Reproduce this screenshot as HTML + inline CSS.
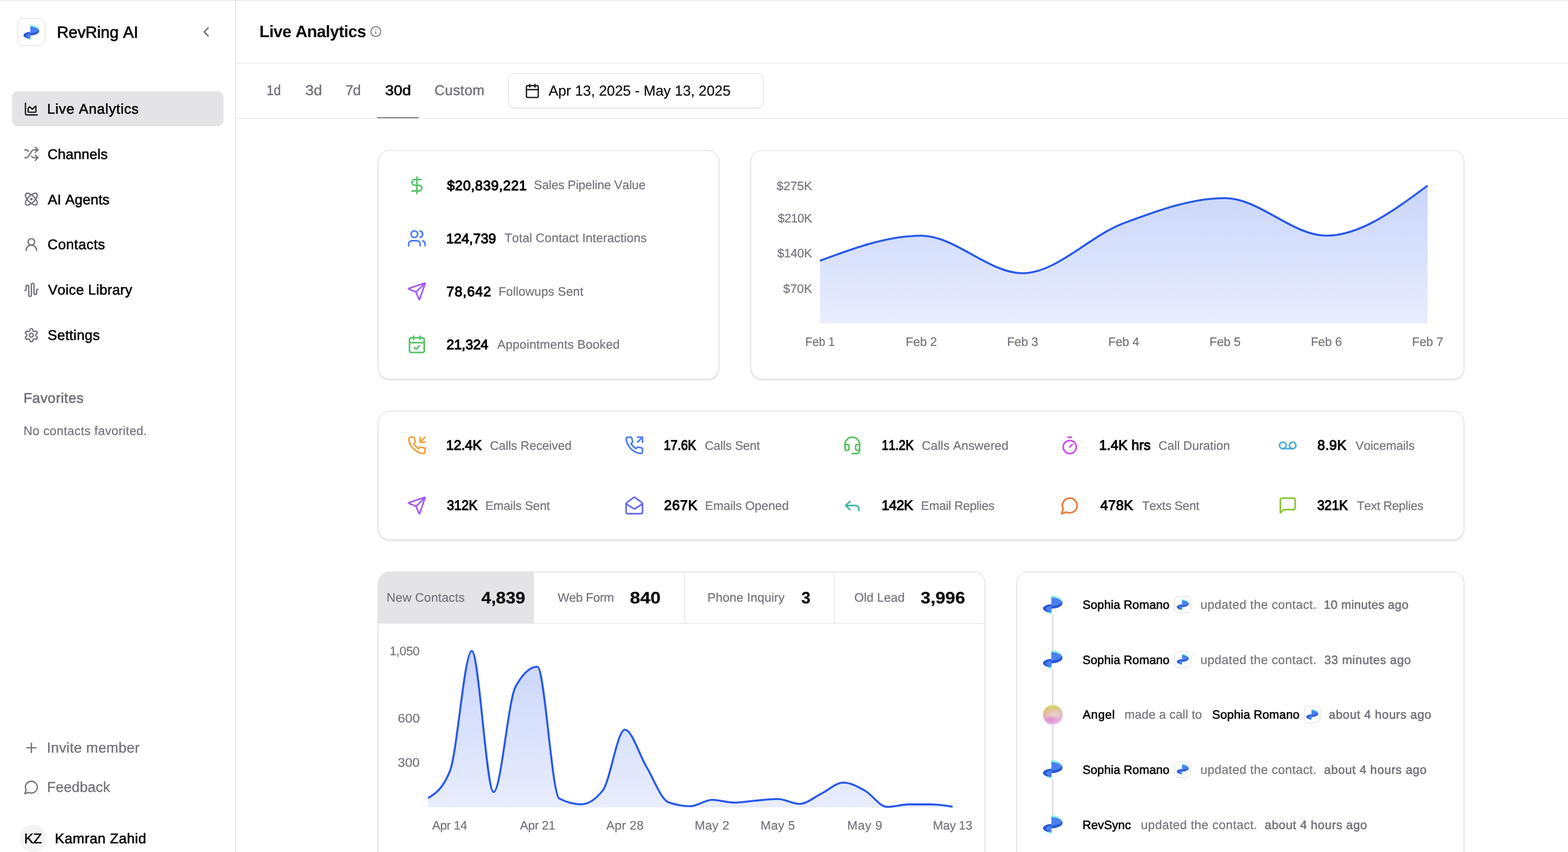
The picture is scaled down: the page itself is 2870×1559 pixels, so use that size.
<!DOCTYPE html><html lang="en"><head><meta charset="utf-8"><title>RevRing AI - Live Analytics</title>
<meta name="viewport" content="width=2870">
<style>
*{box-sizing:border-box}
html,body{margin:0;padding:0}
body{width:2870px;height:1559px;overflow:hidden;background:#fff;position:relative;
 font-family:"Liberation Sans",sans-serif;font-kerning:none;-webkit-font-smoothing:antialiased;text-rendering:geometricPrecision}
#app{position:absolute;left:0;top:0;width:2870px;height:1559px;will-change:transform;opacity:.999}
.t{position:absolute;white-space:nowrap;line-height:1;margin:0;padding:0;font-weight:400;display:block}
.ic{position:absolute;display:block;overflow:visible}
.abs{position:absolute}
.sidebar{position:absolute;left:0;top:0;width:432px;height:1559px;border-right:1px solid #dcdce1;background:#fff}
.topline{position:absolute;left:0;top:0;width:2870px;height:1px;background:#dfe1de;z-index:5}
.header{position:absolute;left:432px;top:0;width:2438px;height:116px;border-bottom:1px solid #e3e3e7}
.tabs{position:absolute;left:432px;top:116px;width:2438px;height:101px;border-bottom:1px solid #e3e3e7}
.main{position:absolute;left:432px;top:217px;width:2438px;height:1342px}
.card{position:absolute;background:#fff;border:1px solid #dddde1;border-radius:21px;
 box-shadow:0 1.8px 5.4px rgba(0,0,0,.1),0 1.8px 3.6px -1.8px rgba(0,0,0,.1)}
.navact{position:absolute;left:22px;top:167px;width:387px;height:64px;border-radius:11px;background:#e4e4e7}
.logobox{position:absolute;border:1px solid #d9d9df;background:#fff}
.datebtn{position:absolute;left:498px;top:18px;width:468px;height:64px;border:1px solid #dcdce2;border-radius:11px;background:#fff;
 box-shadow:0 1.8px 3.6px rgba(0,0,0,.05)}
.uline{position:absolute;left:258px;top:99px;width:76px;height:1px;background:#18181b}
.avatar{position:absolute;left:36px;top:1509px;width:50px;height:50px;border-radius:50%;background:#f4f4f5}
.tabhead{position:absolute;left:0;top:0;width:1109px;height:94px;border-bottom:1px solid #dfdfe4;border-radius:20px 20px 0 0;overflow:hidden}
.tab{position:absolute;top:0;height:93px;border-right:1px solid #dfdfe4}
.tab.on{background:#e4e4e7}
.tl{position:absolute;width:2px;background:#d3d5dc}
.angel{position:absolute;width:36px;height:36px;border-radius:50%;
 background:radial-gradient(ellipse 42% 22% at 40% 76%,#e08cd6 0,rgba(224,140,214,0) 100%),
 radial-gradient(ellipse 48% 30% at 58% 46%,#ecd4ca 0,rgba(236,212,202,0) 100%),
 linear-gradient(170deg,#d6e860 0%,#d8c680 24%,#e2bab6 48%,#e6aede 76%,#f0caf4 100%)}
</style></head><body><div id="app">
<aside class="sidebar">
<div class="logobox" style="left:32px;top:33px;width:51px;height:51px;border-radius:10px"></div>
<svg class="ic" style="left:42.9px;top:44.9px" width="29" height="29" viewBox="0 0 36 36"><path fill="#7af0dc" d="M15.4 .7C22 .85 28.6 3.5 32.7 7.5C34.3 9.1 35.4 11.2 35.75 13.6L15.4 10z"/><path fill="#7af0dc" d="M6.6 30.2C9.4 32.9 12.4 34.6 15.4 35.3V30z"/><path fill="#2858d4" d="M34.1 11.3c1.1 1.1 1.7 2.3 1.65 3.6C35.5 20.3 26.5 24.5 15.4 24.75V16.4C8.5 16.6 1.2 19.5 .1 23.5c-.7 2.6 2.4 5.4 6.9 7.15L15.4 31.5V19.6z"/><path fill="#4a80f0" d="M15.4 4.6c8 0 16.2 2.9 18.8 6.8.6 4.1-7.8 7.8-18.8 8.1z"/><path fill="#4a80f0" d="M15.4 19.8C10 20.5 6 22.7 5.9 25.5c-.1 2.2 3.6 4.9 9.5 5.9z"/></svg>
<div class="t" style="left:104.28px;top:45px;font-size:29.5px;letter-spacing:-0.05px;color:#09090b;-webkit-text-stroke:0.8px #09090b;">RevRing AI</div>
<svg class="ic" style="left:362.8px;top:43.7px" width="28.8" height="28.8" viewBox="0 0 24 24" fill="none" stroke="#686872" stroke-width="2" stroke-linecap="round" stroke-linejoin="round"><path d="m15 18-6-6 6-6"/></svg>
<nav>
<div class="navact"></div>
<svg class="ic" style="left:43.2px;top:184.6px" width="28.8" height="28.8" viewBox="0 0 24 24" fill="none" stroke="#18181b" stroke-width="2" stroke-linecap="round" stroke-linejoin="round"><path d="M3 3v16a2 2 0 0 0 2 2h16"/><path d="M7 11.207a.5.5 0 0 1 .146-.353l2-2a.5.5 0 0 1 .708 0l3.292 3.292a.5.5 0 0 0 .708 0l4.292-4.292a.5.5 0 0 1 .854.353V16a1 1 0 0 1-1 1H8a1 1 0 0 1-1-1z"/></svg>
<a class="t" style="left:86.28px;top:188px;font-size:25.81px;letter-spacing:0.75px;color:#09090b;-webkit-text-stroke:0.7px #09090b;">Live Analytics</a>
<svg class="ic" style="left:43.2px;top:267.4px" width="28.8" height="28.8" viewBox="0 0 24 24" fill="none" stroke="#71717a" stroke-width="2" stroke-linecap="round" stroke-linejoin="round"><path d="m18 14 4 4-4 4"/><path d="m18 2 4 4-4 4"/><path d="M2 18h1.973a4 4 0 0 0 3.3-1.7l5.454-8.6a4 4 0 0 1 3.3-1.7H22"/><path d="M2 6h1.972a4 4 0 0 1 3.6 2.2"/><path d="M22 18h-6.041a4 4 0 0 1-3.3-1.8l-.359-.45"/></svg>
<a class="t" style="left:87.09px;top:271px;font-size:25.81px;letter-spacing:0.14px;color:#09090b;-webkit-text-stroke:0.7px #09090b;">Channels</a>
<svg class="ic" style="left:43.2px;top:350.2px" width="28.8" height="28.8" viewBox="0 0 24 24" fill="none" stroke="#71717a" stroke-width="2" stroke-linecap="round" stroke-linejoin="round"><circle cx="12" cy="12" r="1"/><path d="M20.2 20.2c2.04-2.03.02-7.36-4.5-11.9-4.54-4.52-9.87-6.54-11.9-4.5-2.04 2.03-.02 7.36 4.5 11.9 4.54 4.52 9.87 6.54 11.9 4.5Z"/><path d="M15.7 15.7c4.52-4.54 6.54-9.87 4.5-11.9-2.03-2.04-7.36-.02-11.9 4.5-4.52 4.54-6.54 9.87-4.5 11.9 2.03 2.04 7.36.02 11.9-4.5Z"/></svg>
<a class="t" style="left:87.45px;top:354px;font-size:25.81px;letter-spacing:0.15px;color:#09090b;-webkit-text-stroke:0.7px #09090b;">AI Agents</a>
<svg class="ic" style="left:43.2px;top:433px" width="28.8" height="28.8" viewBox="0 0 24 24" fill="none" stroke="#71717a" stroke-width="2" stroke-linecap="round" stroke-linejoin="round"><circle cx="12" cy="8" r="5"/><path d="M20 21a8 8 0 0 0-16 0"/></svg>
<a class="t" style="left:87.09px;top:436px;font-size:25.81px;letter-spacing:0.46px;color:#09090b;-webkit-text-stroke:0.7px #09090b;">Contacts</a>
<svg class="ic" style="left:43.2px;top:515.8px" width="28.8" height="28.8" viewBox="0 0 24 24" fill="none" stroke="#71717a" stroke-width="2" stroke-linecap="round" stroke-linejoin="round"><path d="M2 13a2 2 0 0 0 2-2V7a2 2 0 0 1 4 0v13a2 2 0 0 0 4 0V4a2 2 0 0 1 4 0v13a2 2 0 0 0 4 0v-4a2 2 0 0 1 2-2"/></svg>
<a class="t" style="left:87.89px;top:519px;font-size:25.81px;letter-spacing:0.28px;color:#09090b;-webkit-text-stroke:0.7px #09090b;">Voice Library</a>
<svg class="ic" style="left:43.2px;top:598.6px" width="28.8" height="28.8" viewBox="0 0 24 24" fill="none" stroke="#71717a" stroke-width="2" stroke-linecap="round" stroke-linejoin="round"><path d="M12.22 2h-.44a2 2 0 0 0-2 2v.18a2 2 0 0 1-1 1.73l-.43.25a2 2 0 0 1-2 0l-.15-.08a2 2 0 0 0-2.73.73l-.22.38a2 2 0 0 0 .73 2.73l.15.1a2 2 0 0 1 1 1.72v.51a2 2 0 0 1-1 1.74l-.15.09a2 2 0 0 0-.73 2.73l.22.38a2 2 0 0 0 2.73.73l.15-.08a2 2 0 0 1 2 0l.43.25a2 2 0 0 1 1 1.73V20a2 2 0 0 0 2 2h.44a2 2 0 0 0 2-2v-.18a2 2 0 0 1 1-1.73l.43-.25a2 2 0 0 1 2 0l.15.08a2 2 0 0 0 2.73-.73l.22-.39a2 2 0 0 0-.73-2.73l-.15-.08a2 2 0 0 1-1-1.74v-.5a2 2 0 0 1 1-1.74l.15-.09a2 2 0 0 0 .73-2.73l-.22-.38a2 2 0 0 0-2.73-.73l-.15.08a2 2 0 0 1-2 0l-.43-.25a2 2 0 0 1-1-1.73V4a2 2 0 0 0-2-2z"/><circle cx="12" cy="12" r="3"/></svg>
<a class="t" style="left:87.23px;top:602px;font-size:25.81px;letter-spacing:0.31px;color:#09090b;-webkit-text-stroke:0.7px #09090b;">Settings</a>
</nav>
<h3 class="t" style="left:42.88px;top:717px;font-size:25.81px;letter-spacing:0.49px;color:#71717a;-webkit-text-stroke:0.7px #71717a;">Favorites</h3>
<p class="t" style="left:42.9px;top:778px;font-size:22.59px;letter-spacing:0.37px;color:#71717a;-webkit-text-stroke:0.2px #71717a;">No contacts favorited.</p>
<svg class="ic" style="left:43.1px;top:1354.2px" width="28.8" height="28.8" viewBox="0 0 24 24" fill="none" stroke="#71717a" stroke-width="2" stroke-linecap="round" stroke-linejoin="round"><path d="M5 12h14"/><path d="M12 5v14"/></svg>
<a class="t" style="left:85.71px;top:1355px;font-size:26.22px;letter-spacing:0.3px;color:#71717a;-webkit-text-stroke:0.35px #71717a;">Invite member</a>
<svg class="ic" style="left:43.2px;top:1426.4px" width="28.8" height="28.8" viewBox="0 0 24 24" fill="none" stroke="#71717a" stroke-width="2" stroke-linecap="round" stroke-linejoin="round"><path d="M7.9 20A9 9 0 1 0 4 16.1L2 22Z"/></svg>
<a class="t" style="left:85.97px;top:1427px;font-size:26.22px;letter-spacing:0.06px;color:#71717a;-webkit-text-stroke:0.35px #71717a;">Feedback</a>
<div class="avatar"></div>
<span class="t" style="left:44.18px;top:1523px;font-size:25.81px;letter-spacing:-0.46px;color:#09090b;-webkit-text-stroke:0.7px #09090b;">KZ</span>
<span class="t" style="left:100.48px;top:1523px;font-size:25.81px;letter-spacing:0.47px;color:#09090b;-webkit-text-stroke:0.7px #09090b;">Kamran Zahid</span>
</aside>
<header class="header">
<h1 class="t" style="left:42.81px;top:43px;font-size:30.43px;letter-spacing:-0.69px;color:#09090b;font-weight:700;">Live Analytics</h1>
<svg class="ic" style="left:245px;top:46.9px" width="21.6" height="21.6" viewBox="0 0 24 24" fill="none" stroke="#71717a" stroke-width="2" stroke-linecap="round" stroke-linejoin="round"><circle cx="12" cy="12" r="10"/><path d="M12 16v-4"/><path d="M12 8h.01"/></svg>
</header>
<nav class="tabs">
<a class="t" style="left:56.38px;top:36px;font-size:26.11px;letter-spacing:0px;color:#71717a;transform:scaleX(0.9007);transform-origin:0 0;-webkit-text-stroke:0.45px #71717a;">1d</a>
<a class="t" style="left:126.82px;top:36px;font-size:26.11px;letter-spacing:0px;color:#71717a;transform:scaleX(1.0563);transform-origin:0 0;-webkit-text-stroke:0.45px #71717a;">3d</a>
<a class="t" style="left:200.24px;top:36px;font-size:26.11px;letter-spacing:-0.67px;color:#71717a;-webkit-text-stroke:0.45px #71717a;">7d</a>
<a class="t" style="left:272.67px;top:38px;font-size:25.7px;letter-spacing:0px;color:#09090b;transform:scaleX(1.1008);transform-origin:0 0;-webkit-text-stroke:0.8px #09090b;">30d</a>
<a class="t" style="left:363.15px;top:36px;font-size:26.11px;letter-spacing:0.33px;color:#71717a;-webkit-text-stroke:0.45px #71717a;">Custom</a>
<div class="uline"></div>
<div class="datebtn"></div>
<svg class="ic" style="left:527.5px;top:35.8px" width="28.8" height="28.8" viewBox="0 0 24 24" fill="none" stroke="#18181b" stroke-width="2" stroke-linecap="round" stroke-linejoin="round"><path d="M8 2v4"/><path d="M16 2v4"/><rect width="18" height="18" x="3" y="4" rx="2"/><path d="M3 10h18"/></svg>
<span class="t" style="left:572.2px;top:37px;font-size:26.4px;letter-spacing:-0.05px;color:#09090b;-webkit-text-stroke:0.2px #09090b;">Apr 13, 2025 - May 13, 2025</span>
</nav>
<main class="main">
<section class="card" style="left:260px;top:58px;width:624px;height:419px">
<svg class="ic" style="left:52px;top:45px" width="36" height="36" viewBox="0 0 24 24" fill="none" stroke="#58c465" stroke-width="2" stroke-linecap="round" stroke-linejoin="round"><path d="M12 2v20"/><path d="M17 5H9.5a3.5 3.5 0 0 0 0 7h5a3.5 3.5 0 0 1 0 7H6"/></svg>
<strong class="t" style="left:125.3px;top:52px;font-size:25.18px;letter-spacing:0.57px;color:#09090b;-webkit-text-stroke:1.25px #09090b;">$20,839,221</strong>
<span class="t" style="left:284.22px;top:52px;font-size:22.59px;letter-spacing:-0.15px;color:#71717a;-webkit-text-stroke:0.2px #71717a;">Sales Pipeline Value</span>
<svg class="ic" style="left:52px;top:142px" width="36" height="36" viewBox="0 0 24 24" fill="none" stroke="#4c7df0" stroke-width="2" stroke-linecap="round" stroke-linejoin="round"><path d="M16 21v-2a4 4 0 0 0-4-4H6a4 4 0 0 0-4 4v2"/><circle cx="9" cy="7" r="4"/><path d="M22 21v-2a4 4 0 0 0-3-3.87"/><path d="M16 3.13a4 4 0 0 1 0 7.75"/></svg>
<strong class="t" style="left:123.66px;top:149px;font-size:25.18px;letter-spacing:0.06px;color:#09090b;-webkit-text-stroke:1.25px #09090b;">124,739</strong>
<span class="t" style="left:230.44px;top:149px;font-size:22.59px;letter-spacing:0.12px;color:#71717a;-webkit-text-stroke:0.2px #71717a;">Total Contact Interactions</span>
<svg class="ic" style="left:52px;top:239px" width="36" height="36" viewBox="0 0 24 24" fill="none" stroke="#a45cf5" stroke-width="2" stroke-linecap="round" stroke-linejoin="round"><path d="M14.536 21.686a.5.5 0 0 0 .937-.024l6.5-19a.496.496 0 0 0-.635-.635l-19 6.5a.5.5 0 0 0-.024.937l7.93 3.18a2 2 0 0 1 1.112 1.11z"/><path d="m21.854 2.147-10.94 10.939"/></svg>
<strong class="t" style="left:124.28px;top:246px;font-size:25.18px;letter-spacing:0.9px;color:#09090b;-webkit-text-stroke:1.25px #09090b;">78,642</strong>
<span class="t" style="left:219.4px;top:247px;font-size:22.59px;letter-spacing:0.07px;color:#71717a;-webkit-text-stroke:0.2px #71717a;">Followups Sent</span>
<svg class="ic" style="left:52px;top:336px" width="36" height="36" viewBox="0 0 24 24" fill="none" stroke="#58c465" stroke-width="2" stroke-linecap="round" stroke-linejoin="round"><path d="M8 2v4"/><path d="M16 2v4"/><rect width="18" height="18" x="3" y="4" rx="2"/><path d="M3 10h18"/><path d="m9 16 2 2 4-4"/></svg>
<strong class="t" style="left:124.31px;top:343px;font-size:25.18px;letter-spacing:-0.09px;color:#09090b;-webkit-text-stroke:1.25px #09090b;">21,324</strong>
<span class="t" style="left:217.31px;top:344px;font-size:22.59px;letter-spacing:0.17px;color:#71717a;-webkit-text-stroke:0.2px #71717a;">Appointments Booked</span>
</section>
<section class="card" style="left:942px;top:58px;width:1306px;height:419px">
<svg class="ic chart" style="left:0;top:0" width="1304" height="417" viewBox="0 0 1304 417"><linearGradient id="g1" gradientUnits="userSpaceOnUse" x1="0" y1="63.6" x2="0" y2="315.6"><stop offset="0" stop-color="#1e50eb" stop-opacity=".24"/><stop offset="1" stop-color="#1e50eb" stop-opacity=".1"/></linearGradient><path d="M126.00,201.05C187.78,178.15,249.56,155.24,311.33,155.24C373.11,155.24,434.89,223.96,496.67,223.96C558.44,223.96,620.22,155.24,682.00,132.33C743.78,109.42,805.56,86.51,867.33,86.51C929.11,86.51,990.89,155.24,1052.67,155.24C1114.44,155.24,1176.22,109.42,1238.00,63.60L1238.00,315.60L126.00,315.60Z" fill="url(#g1)"/><path d="M126.00,201.05C187.78,178.15,249.56,155.24,311.33,155.24C373.11,155.24,434.89,223.96,496.67,223.96C558.44,223.96,620.22,155.24,682.00,132.33C743.78,109.42,805.56,86.51,867.33,86.51C929.11,86.51,990.89,155.24,1052.67,155.24C1114.44,155.24,1176.22,109.42,1238.00,63.60" fill="none" stroke="#2658ec" stroke-width="3.6" stroke-linejoin="round"/></svg>
<span class="t" style="left:46.41px;top:54px;font-size:22.59px;letter-spacing:-0.06px;color:#71717a;-webkit-text-stroke:0.2px #71717a;">$275K</span>
<span class="t" style="left:48.71px;top:113px;font-size:22.59px;letter-spacing:-0.63px;color:#71717a;-webkit-text-stroke:0.2px #71717a;">$210K</span>
<span class="t" style="left:47.71px;top:177px;font-size:22.59px;letter-spacing:-0.38px;color:#71717a;-webkit-text-stroke:0.2px #71717a;">$140K</span>
<span class="t" style="left:58.61px;top:242px;font-size:22.59px;letter-spacing:0.05px;color:#71717a;-webkit-text-stroke:0.2px #71717a;">$70K</span>
<span class="t" style="left:99.12px;top:339px;font-size:22.59px;letter-spacing:0px;color:#71717a;transform:scaleX(0.9360);transform-origin:0 0;-webkit-text-stroke:0.2px #71717a;">Feb 1</span>
<span class="t" style="left:282.83px;top:339px;font-size:22.59px;letter-spacing:-0.12px;color:#71717a;-webkit-text-stroke:0.2px #71717a;">Feb 2</span>
<span class="t" style="left:468.16px;top:339px;font-size:22.59px;letter-spacing:-0.15px;color:#71717a;-webkit-text-stroke:0.2px #71717a;">Feb 3</span>
<span class="t" style="left:653.5px;top:339px;font-size:22.59px;letter-spacing:-0.24px;color:#71717a;-webkit-text-stroke:0.2px #71717a;">Feb 4</span>
<span class="t" style="left:838.83px;top:339px;font-size:22.59px;letter-spacing:-0.17px;color:#71717a;-webkit-text-stroke:0.2px #71717a;">Feb 5</span>
<span class="t" style="left:1024.16px;top:339px;font-size:22.59px;letter-spacing:-0.15px;color:#71717a;-webkit-text-stroke:0.2px #71717a;">Feb 6</span>
<span class="t" style="left:1209.5px;top:339px;font-size:22.59px;letter-spacing:-0.12px;color:#71717a;-webkit-text-stroke:0.2px #71717a;">Feb 7</span>
</section>
<section class="card" style="left:260px;top:535px;width:1988px;height:236px">
<svg class="ic" style="left:52.2px;top:43.8px" width="36" height="36" viewBox="0 0 24 24" fill="none" stroke="#eea23c" stroke-width="2" stroke-linecap="round" stroke-linejoin="round"><path d="M16 2v6h6"/><path d="m22 2-6 6"/><path d="M22 16.92v3a2 2 0 0 1-2.18 2 19.79 19.79 0 0 1-8.63-3.07 19.5 19.5 0 0 1-6-6 19.79 19.79 0 0 1-3.07-8.67A2 2 0 0 1 4.11 2h3a2 2 0 0 1 2 1.72 12.84 12.84 0 0 0 .7 2.81 2 2 0 0 1-.45 2.11L8.09 9.91a16 16 0 0 0 6 6l1.27-1.27a2 2 0 0 1 2.11-.45 12.84 12.84 0 0 0 2.81.7A2 2 0 0 1 22 16.92z"/></svg>
<strong class="t" style="left:123.56px;top:50px;font-size:25.18px;letter-spacing:-0.14px;color:#09090b;-webkit-text-stroke:1.25px #09090b;">12.4K</strong>
<span class="t" style="left:203.8px;top:52px;font-size:22.59px;letter-spacing:-0.09px;color:#71717a;-webkit-text-stroke:0.2px #71717a;">Calls Received</span>
<svg class="ic" style="left:450.1px;top:43.8px" width="36" height="36" viewBox="0 0 24 24" fill="none" stroke="#4c7df0" stroke-width="2" stroke-linecap="round" stroke-linejoin="round"><path d="M22 8V2h-6"/><path d="m16 8 6-6"/><path d="M22 16.92v3a2 2 0 0 1-2.18 2 19.79 19.79 0 0 1-8.63-3.07 19.5 19.5 0 0 1-6-6 19.79 19.79 0 0 1-3.07-8.67A2 2 0 0 1 4.11 2h3a2 2 0 0 1 2 1.72 12.84 12.84 0 0 0 .7 2.81 2 2 0 0 1-.45 2.11L8.09 9.91a16 16 0 0 0 6 6l1.27-1.27a2 2 0 0 1 2.11-.45 12.84 12.84 0 0 0 2.81.7A2 2 0 0 1 22 16.92z"/></svg>
<strong class="t" style="left:522.05px;top:50px;font-size:25.18px;letter-spacing:0px;color:#09090b;transform:scaleX(0.8986);transform-origin:0 0;-webkit-text-stroke:1.25px #09090b;">17.6K</strong>
<span class="t" style="left:597px;top:52px;font-size:22.59px;letter-spacing:-0.22px;color:#71717a;-webkit-text-stroke:0.2px #71717a;">Calls Sent</span>
<svg class="ic" style="left:848.5px;top:43.8px" width="36" height="36" viewBox="0 0 24 24" fill="none" stroke="#58c465" stroke-width="2" stroke-linecap="round" stroke-linejoin="round"><path d="M3 11h3a2 2 0 0 1 2 2v3a2 2 0 0 1-2 2H5a2 2 0 0 1-2-2v-5Zm0 0a9 9 0 1 1 18 0m0 0v5a2 2 0 0 1-2 2h-1a2 2 0 0 1-2-2v-3a2 2 0 0 1 2-2h3Z"/><path d="M21 16v2a4 4 0 0 1-4 4h-5"/></svg>
<strong class="t" style="left:920.88px;top:50px;font-size:25.18px;letter-spacing:0px;color:#09090b;transform:scaleX(0.8860);transform-origin:0 0;-webkit-text-stroke:1.25px #09090b;">11.2K</strong>
<span class="t" style="left:994.3px;top:52px;font-size:22.59px;letter-spacing:0.13px;color:#71717a;-webkit-text-stroke:0.2px #71717a;">Calls Answered</span>
<svg class="ic" style="left:1247px;top:43.8px" width="36" height="36" viewBox="0 0 24 24" fill="none" stroke="#cf4fee" stroke-width="2" stroke-linecap="round" stroke-linejoin="round"><path d="M10 2h4"/><path d="m12 14 3-3"/><circle cx="12" cy="14" r="8"/></svg>
<strong class="t" style="left:1318.76px;top:50px;font-size:25.18px;letter-spacing:0.1px;color:#09090b;-webkit-text-stroke:1.25px #09090b;">1.4K hrs</strong>
<span class="t" style="left:1427.5px;top:52px;font-size:22.59px;letter-spacing:0.03px;color:#71717a;-webkit-text-stroke:0.2px #71717a;">Call Duration</span>
<svg class="ic" style="left:1645.9px;top:43.8px" width="36" height="36" viewBox="0 0 24 24" fill="none" stroke="#4aaed2" stroke-width="2" stroke-linecap="round" stroke-linejoin="round"><circle cx="6" cy="12" r="4"/><circle cx="18" cy="12" r="4"/><path d="M6 16h12"/></svg>
<strong class="t" style="left:1718.28px;top:50px;font-size:25.18px;letter-spacing:0.41px;color:#09090b;-webkit-text-stroke:1.25px #09090b;">8.9K</strong>
<span class="t" style="left:1788.05px;top:52px;font-size:22.59px;letter-spacing:-0.11px;color:#71717a;-webkit-text-stroke:0.2px #71717a;">Voicemails</span>
<svg class="ic" style="left:52.2px;top:154px" width="36" height="36" viewBox="0 0 24 24" fill="none" stroke="#a45cf5" stroke-width="2" stroke-linecap="round" stroke-linejoin="round"><path d="M14.536 21.686a.5.5 0 0 0 .937-.024l6.5-19a.496.496 0 0 0-.635-.635l-19 6.5a.5.5 0 0 0-.024.937l7.93 3.18a2 2 0 0 1 1.112 1.11z"/><path d="m21.854 2.147-10.94 10.939"/></svg>
<strong class="t" style="left:124.56px;top:160px;font-size:25.18px;letter-spacing:0px;color:#09090b;transform:scaleX(0.9511);transform-origin:0 0;-webkit-text-stroke:1.25px #09090b;">312K</strong>
<span class="t" style="left:195.2px;top:162px;font-size:22.59px;letter-spacing:-0.21px;color:#71717a;-webkit-text-stroke:0.2px #71717a;">Emails Sent</span>
<svg class="ic" style="left:450.1px;top:154px" width="36" height="36" viewBox="0 0 24 24" fill="none" stroke="#6468f0" stroke-width="2" stroke-linecap="round" stroke-linejoin="round"><path d="M21.2 8.4c.5.38.8.97.8 1.6v10a2 2 0 0 1-2 2H4a2 2 0 0 1-2-2V10a2 2 0 0 1 .8-1.6l8-6a2 2 0 0 1 2.4 0l8 6Z"/><path d="m22 10-8.97 5.7a1.94 1.94 0 0 1-2.06 0L2 10"/></svg>
<strong class="t" style="left:522.51px;top:160px;font-size:25.18px;letter-spacing:0.63px;color:#09090b;-webkit-text-stroke:1.25px #09090b;">267K</strong>
<span class="t" style="left:597.5px;top:162px;font-size:22.59px;letter-spacing:-0.09px;color:#71717a;-webkit-text-stroke:0.2px #71717a;">Emails Opened</span>
<svg class="ic" style="left:848.5px;top:154px" width="36" height="36" viewBox="0 0 24 24" fill="none" stroke="#42b4a0" stroke-width="2" stroke-linecap="round" stroke-linejoin="round"><path d="M9 17 4 12l5-5"/><path d="M20 18v-2a4 4 0 0 0-4-4H4"/></svg>
<strong class="t" style="left:920.66px;top:160px;font-size:25.18px;letter-spacing:-0.35px;color:#09090b;-webkit-text-stroke:1.25px #09090b;">142K</strong>
<span class="t" style="left:992.8px;top:162px;font-size:22.59px;letter-spacing:-0.29px;color:#71717a;-webkit-text-stroke:0.2px #71717a;">Email Replies</span>
<svg class="ic" style="left:1247px;top:154px" width="36" height="36" viewBox="0 0 24 24" fill="none" stroke="#e97a32" stroke-width="2" stroke-linecap="round" stroke-linejoin="round"><path d="M7.9 20A9 9 0 1 0 4 16.1L2 22Z"/></svg>
<strong class="t" style="left:1320.9px;top:160px;font-size:25.18px;letter-spacing:0.4px;color:#09090b;-webkit-text-stroke:1.25px #09090b;">478K</strong>
<span class="t" style="left:1397.24px;top:162px;font-size:22.59px;letter-spacing:-0.31px;color:#71717a;-webkit-text-stroke:0.2px #71717a;">Texts Sent</span>
<svg class="ic" style="left:1645.9px;top:154px" width="36" height="36" viewBox="0 0 24 24" fill="none" stroke="#8ac63a" stroke-width="2" stroke-linecap="round" stroke-linejoin="round"><path d="M21 15a2 2 0 0 1-2 2H7l-4 4V5a2 2 0 0 1 2-2h14a2 2 0 0 1 2 2z"/></svg>
<strong class="t" style="left:1718.46px;top:160px;font-size:25.18px;letter-spacing:0px;color:#09090b;transform:scaleX(0.9528);transform-origin:0 0;-webkit-text-stroke:1.25px #09090b;">321K</strong>
<span class="t" style="left:1790.44px;top:162px;font-size:22.59px;letter-spacing:-0.31px;color:#71717a;-webkit-text-stroke:0.2px #71717a;">Text Replies</span>
</section>
<section class="card" style="left:260px;top:829px;width:1111px;height:560px">
<div class="tabhead">
<div class="tab on" style="left:0px;width:284px">
<span class="t" style="left:14.4px;top:36px;font-size:22.59px;letter-spacing:0.24px;color:#71717a;-webkit-text-stroke:0.2px #71717a;">New Contacts</span>
<strong class="t" style="left:188.31px;top:33px;font-size:30.08px;letter-spacing:0px;color:#09090b;transform:scaleX(1.0692);transform-origin:0 0;font-weight:700;-webkit-text-stroke:0.3px #09090b;">4,839</strong>
</div>
<div class="tab" style="left:284px;width:276px">
<span class="t" style="left:43.85px;top:36px;font-size:22.59px;letter-spacing:-0.33px;color:#71717a;-webkit-text-stroke:0.2px #71717a;">Web Form</span>
<strong class="t" style="left:176.03px;top:33px;font-size:30.08px;letter-spacing:0px;color:#09090b;transform:scaleX(1.1209);transform-origin:0 0;font-weight:700;-webkit-text-stroke:0.3px #09090b;">840</strong>
</div>
<div class="tab" style="left:560px;width:275px">
<span class="t" style="left:41.7px;top:36px;font-size:22.59px;letter-spacing:0.17px;color:#71717a;-webkit-text-stroke:0.2px #71717a;">Phone Inquiry</span>
<strong class="t" style="left:213.81px;top:33px;font-size:30.08px;letter-spacing:0px;color:#09090b;font-weight:700;-webkit-text-stroke:0.3px #09090b;">3</strong>
</div>
<div class="tab" style="left:835px;width:274px;border-right:0">
<span class="t" style="left:35.68px;top:36px;font-size:22.59px;letter-spacing:0.06px;color:#71717a;-webkit-text-stroke:0.2px #71717a;">Old Lead</span>
<strong class="t" style="left:156.85px;top:33px;font-size:30.08px;letter-spacing:0px;color:#09090b;transform:scaleX(1.0844);transform-origin:0 0;font-weight:700;-webkit-text-stroke:0.3px #09090b;">3,996</strong>
</div>
</div>
<svg class="ic chart" style="left:0;top:0" width="1109" height="520" viewBox="0 0 1109 520"><linearGradient id="g2" gradientUnits="userSpaceOnUse" x1="0" y1="143" x2="0" y2="430.6"><stop offset="0" stop-color="#1e50eb" stop-opacity=".24"/><stop offset="1" stop-color="#1e50eb" stop-opacity=".1"/></linearGradient><path d="M90.50,413.50C103.83,405.25,117.17,397.00,130.50,364.00C143.83,331.00,157.17,144.00,170.50,144.00C183.83,144.00,197.17,402.40,210.50,402.40C223.83,402.40,237.17,234.33,250.50,209.80C263.83,185.27,277.17,173.00,290.50,173.00C303.83,173.00,317.17,406.87,330.50,414.00C343.83,421.13,357.17,424.70,370.50,424.70C383.83,424.70,397.17,416.13,410.50,399.00C423.83,381.87,437.17,288.30,450.50,288.30C463.83,288.30,477.17,334.48,490.50,356.60C503.83,378.72,517.17,416.20,530.50,421.00C543.83,425.80,557.17,428.20,570.50,428.20C583.83,428.20,597.17,416.50,610.50,416.50C623.83,416.50,637.17,421.60,650.50,421.60C663.83,421.60,677.17,419.10,690.50,418.00C703.83,416.90,717.17,415.00,730.50,415.00C743.83,415.00,757.17,424.00,770.50,424.00C783.83,424.00,797.17,411.60,810.50,405.10C823.83,398.60,837.17,385.00,850.50,385.00C863.83,385.00,877.17,392.60,890.50,400.00C903.83,407.40,917.17,429.40,930.50,429.40C943.83,429.40,957.17,424.90,970.50,424.90C983.83,424.90,997.17,424.90,1010.50,424.90C1023.83,424.90,1037.17,427.00,1050.50,429.10L1050.50,430.60L90.50,430.60Z" fill="url(#g2)"/><path d="M90.50,413.50C103.83,405.25,117.17,397.00,130.50,364.00C143.83,331.00,157.17,144.00,170.50,144.00C183.83,144.00,197.17,402.40,210.50,402.40C223.83,402.40,237.17,234.33,250.50,209.80C263.83,185.27,277.17,173.00,290.50,173.00C303.83,173.00,317.17,406.87,330.50,414.00C343.83,421.13,357.17,424.70,370.50,424.70C383.83,424.70,397.17,416.13,410.50,399.00C423.83,381.87,437.17,288.30,450.50,288.30C463.83,288.30,477.17,334.48,490.50,356.60C503.83,378.72,517.17,416.20,530.50,421.00C543.83,425.80,557.17,428.20,570.50,428.20C583.83,428.20,597.17,416.50,610.50,416.50C623.83,416.50,637.17,421.60,650.50,421.60C663.83,421.60,677.17,419.10,690.50,418.00C703.83,416.90,717.17,415.00,730.50,415.00C743.83,415.00,757.17,424.00,770.50,424.00C783.83,424.00,797.17,411.60,810.50,405.10C823.83,398.60,837.17,385.00,850.50,385.00C863.83,385.00,877.17,392.60,890.50,400.00C903.83,407.40,917.17,429.40,930.50,429.40C943.83,429.40,957.17,424.90,970.50,424.90C983.83,424.90,997.17,424.90,1010.50,424.90C1023.83,424.90,1037.17,427.00,1050.50,429.10" fill="none" stroke="#2658ec" stroke-width="3.6" stroke-linejoin="round"/></svg>
<span class="t" style="left:20.23px;top:134px;font-size:22.59px;letter-spacing:-0.41px;color:#71717a;-webkit-text-stroke:0.2px #71717a;">1,050</span>
<span class="t" style="left:34.72px;top:257px;font-size:22.59px;letter-spacing:0px;color:#71717a;transform:scaleX(1.0740);transform-origin:0 0;-webkit-text-stroke:0.2px #71717a;">600</span>
<span class="t" style="left:35.03px;top:338px;font-size:22.59px;letter-spacing:0px;color:#71717a;transform:scaleX(1.0654);transform-origin:0 0;-webkit-text-stroke:0.2px #71717a;">300</span>
<span class="t" style="left:97.96px;top:453px;font-size:22.59px;letter-spacing:-0.49px;color:#71717a;-webkit-text-stroke:0.2px #71717a;">Apr 14</span>
<span class="t" style="left:258.66px;top:453px;font-size:22.59px;letter-spacing:-0.32px;color:#71717a;-webkit-text-stroke:0.2px #71717a;">Apr 21</span>
<span class="t" style="left:416.66px;top:453px;font-size:22.59px;letter-spacing:0.37px;color:#71717a;-webkit-text-stroke:0.2px #71717a;">Apr 28</span>
<span class="t" style="left:578.55px;top:453px;font-size:22.59px;letter-spacing:0.47px;color:#71717a;-webkit-text-stroke:0.2px #71717a;">May 2</span>
<span class="t" style="left:698.95px;top:453px;font-size:22.59px;letter-spacing:0.42px;color:#71717a;-webkit-text-stroke:0.2px #71717a;">May 5</span>
<span class="t" style="left:857.85px;top:453px;font-size:22.59px;letter-spacing:0.65px;color:#71717a;-webkit-text-stroke:0.2px #71717a;">May 9</span>
<span class="t" style="left:1014.45px;top:453px;font-size:22.59px;letter-spacing:-0.33px;color:#71717a;-webkit-text-stroke:0.2px #71717a;">May 13</span>
</section>
<section class="card" style="left:1429px;top:829px;width:819px;height:560px">
<ul style="list-style:none;margin:0;padding:0">
<li>
<div class="tl" style="left:64px;top:76.8px;height:65.6px"></div>
<svg class="ic" style="left:47.1px;top:41.5px" width="36" height="36" viewBox="0 0 36 36"><path fill="#7af0dc" d="M15.4 .7C22 .85 28.6 3.5 32.7 7.5C34.3 9.1 35.4 11.2 35.75 13.6L15.4 10z"/><path fill="#7af0dc" d="M6.6 30.2C9.4 32.9 12.4 34.6 15.4 35.3V30z"/><path fill="#2858d4" d="M34.1 11.3c1.1 1.1 1.7 2.3 1.65 3.6C35.5 20.3 26.5 24.5 15.4 24.75V16.4C8.5 16.6 1.2 19.5 .1 23.5c-.7 2.6 2.4 5.4 6.9 7.15L15.4 31.5V19.6z"/><path fill="#4a80f0" d="M15.4 4.6c8 0 16.2 2.9 18.8 6.8.6 4.1-7.8 7.8-18.8 8.1z"/><path fill="#4a80f0" d="M15.4 19.8C10 20.5 6 22.7 5.9 25.5c-.1 2.2 3.6 4.9 9.5 5.9z"/></svg>
<b class="t" style="left:119.4px;top:49px;font-size:22.01px;letter-spacing:0.12px;color:#09090b;-webkit-text-stroke:0.7px #09090b;">Sophia Romano</b>
<div class="logobox" style="left:287.4px;top:44px;width:30.5px;height:30.5px;border-radius:8px"></div><svg class="ic" style="left:291.6px;top:48.5px" width="22" height="22" viewBox="0 0 36 36"><path fill="#7af0dc" d="M15.4 .7C22 .85 28.6 3.5 32.7 7.5C34.3 9.1 35.4 11.2 35.75 13.6L15.4 10z"/><path fill="#7af0dc" d="M6.6 30.2C9.4 32.9 12.4 34.6 15.4 35.3V30z"/><path fill="#2858d4" d="M34.1 11.3c1.1 1.1 1.7 2.3 1.65 3.6C35.5 20.3 26.5 24.5 15.4 24.75V16.4C8.5 16.6 1.2 19.5 .1 23.5c-.7 2.6 2.4 5.4 6.9 7.15L15.4 31.5V19.6z"/><path fill="#4a80f0" d="M15.4 4.6c8 0 16.2 2.9 18.8 6.8.6 4.1-7.8 7.8-18.8 8.1z"/><path fill="#4a80f0" d="M15.4 19.8C10 20.5 6 22.7 5.9 25.5c-.1 2.2 3.6 4.9 9.5 5.9z"/></svg>
<span class="t" style="left:335.18px;top:49px;font-size:22.59px;letter-spacing:0.41px;color:#71717a;-webkit-text-stroke:0.2px #71717a;">updated the contact.</span>
<time class="t" style="left:561.16px;top:49px;font-size:22.13px;letter-spacing:0.27px;color:#71717a;-webkit-text-stroke:0.6px #71717a;">10 minutes ago</time>
</li>
<li>
<div class="tl" style="left:64px;top:177.4px;height:65.6px"></div>
<svg class="ic" style="left:47.1px;top:142.1px" width="36" height="36" viewBox="0 0 36 36"><path fill="#7af0dc" d="M15.4 .7C22 .85 28.6 3.5 32.7 7.5C34.3 9.1 35.4 11.2 35.75 13.6L15.4 10z"/><path fill="#7af0dc" d="M6.6 30.2C9.4 32.9 12.4 34.6 15.4 35.3V30z"/><path fill="#2858d4" d="M34.1 11.3c1.1 1.1 1.7 2.3 1.65 3.6C35.5 20.3 26.5 24.5 15.4 24.75V16.4C8.5 16.6 1.2 19.5 .1 23.5c-.7 2.6 2.4 5.4 6.9 7.15L15.4 31.5V19.6z"/><path fill="#4a80f0" d="M15.4 4.6c8 0 16.2 2.9 18.8 6.8.6 4.1-7.8 7.8-18.8 8.1z"/><path fill="#4a80f0" d="M15.4 19.8C10 20.5 6 22.7 5.9 25.5c-.1 2.2 3.6 4.9 9.5 5.9z"/></svg>
<b class="t" style="left:119.4px;top:150px;font-size:22.01px;letter-spacing:0.12px;color:#09090b;-webkit-text-stroke:0.7px #09090b;">Sophia Romano</b>
<div class="logobox" style="left:287.4px;top:144.6px;width:30.5px;height:30.5px;border-radius:8px"></div><svg class="ic" style="left:291.6px;top:149.1px" width="22" height="22" viewBox="0 0 36 36"><path fill="#7af0dc" d="M15.4 .7C22 .85 28.6 3.5 32.7 7.5C34.3 9.1 35.4 11.2 35.75 13.6L15.4 10z"/><path fill="#7af0dc" d="M6.6 30.2C9.4 32.9 12.4 34.6 15.4 35.3V30z"/><path fill="#2858d4" d="M34.1 11.3c1.1 1.1 1.7 2.3 1.65 3.6C35.5 20.3 26.5 24.5 15.4 24.75V16.4C8.5 16.6 1.2 19.5 .1 23.5c-.7 2.6 2.4 5.4 6.9 7.15L15.4 31.5V19.6z"/><path fill="#4a80f0" d="M15.4 4.6c8 0 16.2 2.9 18.8 6.8.6 4.1-7.8 7.8-18.8 8.1z"/><path fill="#4a80f0" d="M15.4 19.8C10 20.5 6 22.7 5.9 25.5c-.1 2.2 3.6 4.9 9.5 5.9z"/></svg>
<span class="t" style="left:335.18px;top:150px;font-size:22.59px;letter-spacing:0.41px;color:#71717a;-webkit-text-stroke:0.2px #71717a;">updated the contact.</span>
<time class="t" style="left:562.01px;top:150px;font-size:22.13px;letter-spacing:0.54px;color:#71717a;-webkit-text-stroke:0.6px #71717a;">33 minutes ago</time>
</li>
<li>
<div class="tl" style="left:64px;top:278px;height:65.6px"></div>
<div class="angel" style="left:47.2px;top:242.5px"></div>
<b class="t" style="left:119.86px;top:250px;font-size:22.01px;letter-spacing:0.58px;color:#09090b;-webkit-text-stroke:0.7px #09090b;">Angel</b>
<span class="t" style="left:196.15px;top:250px;font-size:22.59px;letter-spacing:0.11px;color:#71717a;-webkit-text-stroke:0.2px #71717a;">made a call to</span>
<b class="t" style="left:356.8px;top:250px;font-size:22.01px;letter-spacing:0.17px;color:#09090b;-webkit-text-stroke:0.7px #09090b;">Sophia Romano</b>
<div class="logobox" style="left:524.8px;top:245.2px;width:30.5px;height:30.5px;border-radius:8px"></div><svg class="ic" style="left:529px;top:249.7px" width="22" height="22" viewBox="0 0 36 36"><path fill="#7af0dc" d="M15.4 .7C22 .85 28.6 3.5 32.7 7.5C34.3 9.1 35.4 11.2 35.75 13.6L15.4 10z"/><path fill="#7af0dc" d="M6.6 30.2C9.4 32.9 12.4 34.6 15.4 35.3V30z"/><path fill="#2858d4" d="M34.1 11.3c1.1 1.1 1.7 2.3 1.65 3.6C35.5 20.3 26.5 24.5 15.4 24.75V16.4C8.5 16.6 1.2 19.5 .1 23.5c-.7 2.6 2.4 5.4 6.9 7.15L15.4 31.5V19.6z"/><path fill="#4a80f0" d="M15.4 4.6c8 0 16.2 2.9 18.8 6.8.6 4.1-7.8 7.8-18.8 8.1z"/><path fill="#4a80f0" d="M15.4 19.8C10 20.5 6 22.7 5.9 25.5c-.1 2.2 3.6 4.9 9.5 5.9z"/></svg>
<time class="t" style="left:570.01px;top:250px;font-size:22.13px;letter-spacing:0.58px;color:#71717a;-webkit-text-stroke:0.6px #71717a;">about 4 hours ago</time>
</li>
<li>
<div class="tl" style="left:64px;top:378.6px;height:65.6px"></div>
<svg class="ic" style="left:47.1px;top:343.3px" width="36" height="36" viewBox="0 0 36 36"><path fill="#7af0dc" d="M15.4 .7C22 .85 28.6 3.5 32.7 7.5C34.3 9.1 35.4 11.2 35.75 13.6L15.4 10z"/><path fill="#7af0dc" d="M6.6 30.2C9.4 32.9 12.4 34.6 15.4 35.3V30z"/><path fill="#2858d4" d="M34.1 11.3c1.1 1.1 1.7 2.3 1.65 3.6C35.5 20.3 26.5 24.5 15.4 24.75V16.4C8.5 16.6 1.2 19.5 .1 23.5c-.7 2.6 2.4 5.4 6.9 7.15L15.4 31.5V19.6z"/><path fill="#4a80f0" d="M15.4 4.6c8 0 16.2 2.9 18.8 6.8.6 4.1-7.8 7.8-18.8 8.1z"/><path fill="#4a80f0" d="M15.4 19.8C10 20.5 6 22.7 5.9 25.5c-.1 2.2 3.6 4.9 9.5 5.9z"/></svg>
<b class="t" style="left:119.4px;top:351px;font-size:22.01px;letter-spacing:0.12px;color:#09090b;-webkit-text-stroke:0.7px #09090b;">Sophia Romano</b>
<div class="logobox" style="left:287.4px;top:345.8px;width:30.5px;height:30.5px;border-radius:8px"></div><svg class="ic" style="left:291.6px;top:350.3px" width="22" height="22" viewBox="0 0 36 36"><path fill="#7af0dc" d="M15.4 .7C22 .85 28.6 3.5 32.7 7.5C34.3 9.1 35.4 11.2 35.75 13.6L15.4 10z"/><path fill="#7af0dc" d="M6.6 30.2C9.4 32.9 12.4 34.6 15.4 35.3V30z"/><path fill="#2858d4" d="M34.1 11.3c1.1 1.1 1.7 2.3 1.65 3.6C35.5 20.3 26.5 24.5 15.4 24.75V16.4C8.5 16.6 1.2 19.5 .1 23.5c-.7 2.6 2.4 5.4 6.9 7.15L15.4 31.5V19.6z"/><path fill="#4a80f0" d="M15.4 4.6c8 0 16.2 2.9 18.8 6.8.6 4.1-7.8 7.8-18.8 8.1z"/><path fill="#4a80f0" d="M15.4 19.8C10 20.5 6 22.7 5.9 25.5c-.1 2.2 3.6 4.9 9.5 5.9z"/></svg>
<span class="t" style="left:335.18px;top:351px;font-size:22.59px;letter-spacing:0.41px;color:#71717a;-webkit-text-stroke:0.2px #71717a;">updated the contact.</span>
<time class="t" style="left:561.61px;top:351px;font-size:22.13px;letter-spacing:0.56px;color:#71717a;-webkit-text-stroke:0.6px #71717a;">about 4 hours ago</time>
</li>
<li>
<svg class="ic" style="left:47.1px;top:443.9px" width="36" height="36" viewBox="0 0 36 36"><path fill="#7af0dc" d="M15.4 .7C22 .85 28.6 3.5 32.7 7.5C34.3 9.1 35.4 11.2 35.75 13.6L15.4 10z"/><path fill="#7af0dc" d="M6.6 30.2C9.4 32.9 12.4 34.6 15.4 35.3V30z"/><path fill="#2858d4" d="M34.1 11.3c1.1 1.1 1.7 2.3 1.65 3.6C35.5 20.3 26.5 24.5 15.4 24.75V16.4C8.5 16.6 1.2 19.5 .1 23.5c-.7 2.6 2.4 5.4 6.9 7.15L15.4 31.5V19.6z"/><path fill="#4a80f0" d="M15.4 4.6c8 0 16.2 2.9 18.8 6.8.6 4.1-7.8 7.8-18.8 8.1z"/><path fill="#4a80f0" d="M15.4 19.8C10 20.5 6 22.7 5.9 25.5c-.1 2.2 3.6 4.9 9.5 5.9z"/></svg>
<b class="t" style="left:119.19px;top:452px;font-size:22.01px;letter-spacing:0.12px;color:#09090b;-webkit-text-stroke:0.7px #09090b;">RevSync</b>
<span class="t" style="left:226.18px;top:452px;font-size:22.59px;letter-spacing:0.44px;color:#71717a;-webkit-text-stroke:0.2px #71717a;">updated the contact.</span>
<time class="t" style="left:452.81px;top:452px;font-size:22.13px;letter-spacing:0.56px;color:#71717a;-webkit-text-stroke:0.6px #71717a;">about 4 hours ago</time>
</li>
</ul>
</section>
</main>
<div class="topline"></div>
</div></body></html>
